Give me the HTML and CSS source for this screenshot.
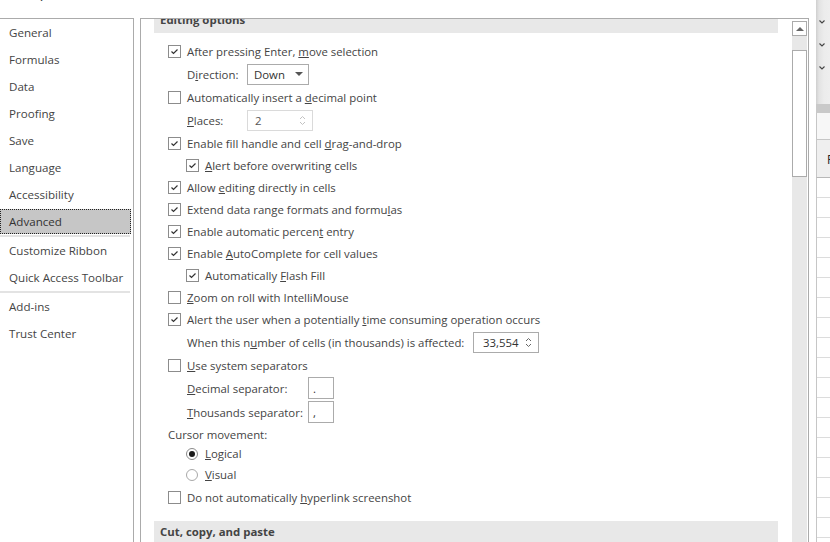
FILE: index.html
```html
<!DOCTYPE html>
<html>
<head>
<meta charset="utf-8">
<link rel="stylesheet" href="styles.css">
</head>
<body>
<div class="screen">
  <div class="dialog">
    <div class="titlebar"><span class="ttl">Options</span></div>
    <div class="panes">
      <nav class="nav">
        <div class="item">General</div>
        <div class="item">Formulas</div>
        <div class="item">Data</div>
        <div class="item">Proofing</div>
        <div class="item">Save</div>
        <div class="item">Language</div>
        <div class="item">Accessibility</div>
        <div class="item sel">Advanced</div>
        <div class="sep"></div>
        <div class="item">Customize Ribbon</div>
        <div class="item">Quick Access Toolbar</div>
        <div class="sep"></div>
        <div class="item">Add-ins</div>
        <div class="item">Trust Center</div>
      </nav>
      <div class="main">
        <div class="content">
          <div class="band top">Editing options</div>
          <div class="list">
            <div class="row"><span class="cb on"><svg viewBox="0 0 11 11"><path d="M2.5 5.5 L4.5 7.5 L8.5 3.5"/></svg></span><span class="tx">After pressing Enter, <u>m</u>ove selection</span></div>
            <div class="row t h24"><span class="lbl w60">D<u>i</u>rection:</span><span class="select">Down<i class="tri"></i></span></div>
            <div class="row"><span class="cb"></span><span class="tx">Automatically insert a <u>d</u>ecimal point</span></div>
            <div class="row t h24"><span class="lbl w60"><u>P</u>laces:</span><span class="spin dis">2<svg class="arr" viewBox="0 0 7 11"><path d="M1 4 L3.5 1.5 L6 4 M1 7 L3.5 9.5 L6 7"/></svg></span></div>
            <div class="row"><span class="cb on"><svg viewBox="0 0 11 11"><path d="M2.5 5.5 L4.5 7.5 L8.5 3.5"/></svg></span><span class="tx">Enable fill handle and cell <u>d</u>rag-and-drop</span></div>
            <div class="row n"><span class="cb on"><svg viewBox="0 0 11 11"><path d="M2.5 5.5 L4.5 7.5 L8.5 3.5"/></svg></span><span class="tx"><u>A</u>lert before overwriting cells</span></div>
            <div class="row"><span class="cb on"><svg viewBox="0 0 11 11"><path d="M2.5 5.5 L4.5 7.5 L8.5 3.5"/></svg></span><span class="tx">Allow <u>e</u>diting directly in cells</span></div>
            <div class="row"><span class="cb on"><svg viewBox="0 0 11 11"><path d="M2.5 5.5 L4.5 7.5 L8.5 3.5"/></svg></span><span class="tx">Extend data range formats and formu<u>l</u>as</span></div>
            <div class="row"><span class="cb on"><svg viewBox="0 0 11 11"><path d="M2.5 5.5 L4.5 7.5 L8.5 3.5"/></svg></span><span class="tx">Enable automatic percen<u>t</u> entry</span></div>
            <div class="row"><span class="cb on"><svg viewBox="0 0 11 11"><path d="M2.5 5.5 L4.5 7.5 L8.5 3.5"/></svg></span><span class="tx">Enable <u>A</u>utoComplete for cell values</span></div>
            <div class="row n"><span class="cb on"><svg viewBox="0 0 11 11"><path d="M2.5 5.5 L4.5 7.5 L8.5 3.5"/></svg></span><span class="tx">Automatically <u>F</u>lash Fill</span></div>
            <div class="row"><span class="cb"></span><span class="tx"><u>Z</u>oom on roll with IntelliMouse</span></div>
            <div class="row"><span class="cb on"><svg viewBox="0 0 11 11"><path d="M2.5 5.5 L4.5 7.5 L8.5 3.5"/></svg></span><span class="tx">Alert the user when a potentially <u>t</u>ime consuming operation occurs</span></div>
            <div class="row t h24"><span class="lbl w286">When this n<u>u</u>mber of cells (in thousands) is affected:</span><span class="spin num">33,554<svg class="arr" viewBox="0 0 7 11"><path d="M1 4 L3.5 1.5 L6 4 M1 7 L3.5 9.5 L6 7"/></svg></span></div>
            <div class="row"><span class="cb"></span><span class="tx"><u>U</u>se system separators</span></div>
            <div class="row t h24"><span class="lbl w121"><u>D</u>ecimal separator:</span><span class="box">.</span></div>
            <div class="row t h24"><span class="lbl w121"><u>T</u>housands separator:</span><span class="box">,</span></div>
            <div class="row h20"><span class="tx">Cursor movement:</span></div>
            <div class="row n h19"><span class="rb on"></span><span class="tx"><u>L</u>ogical</span></div>
            <div class="row n h23"><span class="rb"></span><span class="tx"><u>V</u>isual</span></div>
            <div class="row"><span class="cb"></span><span class="tx">Do not automatically <u>h</u>yperlink screenshot</span></div>
          </div>
          <div class="band next">Cut, copy, and paste</div>
        </div>
        <div class="scroll">
          <div class="up"><i class="utri"></i></div>
          <div class="track"><div class="thumb"></div></div>
        </div>
      </div>
    </div>
  </div>
  <div class="strip">
    <div class="ribbon">
      <svg class="chev" viewBox="0 0 6 4"><path d="M0.5 0.5 L3 3 L5.5 0.5"/></svg>
      <svg class="chev" viewBox="0 0 6 4"><path d="M0.5 0.5 L3 3 L5.5 0.5"/></svg>
      <svg class="chev" viewBox="0 0 6 4"><path d="M0.5 0.5 L3 3 L5.5 0.5"/></svg>
    </div>
    <div class="dark"></div>
    <div class="fbar"></div>
    <div class="colhead">F</div>
    <div class="cells"></div>
  </div>
</div>
</body>
</html>
```
FILE: styles.css
```css
* { box-sizing: border-box; }
html, body { margin: 0; padding: 0; }
body {
  width: 830px;
  height: 542px;
  overflow: hidden;
  background: #fff;
  font-family: "Open Sans", "Noto Sans", sans-serif;
  font-size: 11.4px;
  color: #444;
}
u { text-decoration: underline; text-underline-offset: 1px; }

.screen { display: flex; height: 542px; }
.dialog { width: 816px; display: flex; flex-direction: column; flex: none; }
.titlebar { height: 18px; overflow: hidden; flex: none; }
.ttl { display: block; margin-top: -19px; padding-left: 27px; font-size: 16px; line-height: 20px; color: #444; }

.panes { flex: 1; display: flex; min-height: 0; }

.nav {
  width: 134px;
  flex: none;
  border-top: 1px solid #ababab;
  border-right: 1px solid #ababab;
  font-size: 11.6px;
}
.item { height: 27px; display: flex; align-items: center; padding-left: 9px; color: #444; white-space: nowrap; }
.item.sel {
  height: 25px;
  margin: 1px 2px 1px 0;
  background: #c6c6c6;
  outline: 1px dotted #222;
  outline-offset: -1px;
  color: #333;
}
.sep { height: 2px; background: #e3e3e3; margin-right: 3px; }

.main {
  margin-left: 6px;
  width: 669px;
  flex: none;
  border: 1px solid #ababab;
  border-bottom: none;
  display: flex;
  min-height: 0;
}
.content { flex: 1; padding-left: 13px; padding-right: 14px; overflow: hidden; }
.band { background: #e8e8e8; font-weight: bold; padding-left: 6px; color: #444; }
.band.top { height: 21px; margin-top: -7px; line-height: 15px; }
.band.next { height: 24px; margin-top: 13px; line-height: 21px; }

.list { margin-top: 7px; }
.row { display: flex; align-items: center; height: 22px; padding-left: 14px; white-space: nowrap; }
.row.n { padding-left: 32px; }
.row.t { padding-left: 33px; }
.row.h24 { height: 24px; }
.row.h20 { height: 20px; }
.row.h19 { height: 19px; }
.row.h23 { height: 23px; }
.tx { white-space: pre; }

.cb {
  width: 13px; height: 13px; flex: none;
  border: 1px solid #8c8c8c;
  background: #fff;
  margin-right: 6px;
  display: flex;
}
.cb svg { width: 11px; height: 11px; }
.cb path { fill: none; stroke: #333; stroke-width: 1.2; }

.rb {
  width: 12px; height: 12px; flex: none;
  border: 1px solid #a8a8a8;
  border-radius: 50%;
  margin-right: 7px;
  display: flex; align-items: center; justify-content: center;
  background: #fff;
}
.rb.on { border-color: #8a8a8a; }
.rb.on::after { content: ""; width: 6px; height: 6px; border-radius: 50%; background: #1a1a1a; }

.lbl { flex: none; white-space: pre; }
.w60 { width: 60px; }
.w121 { width: 121px; }
.w286 { width: 286px; }

.select {
  width: 62px; height: 21px;
  border: 1px solid #ababab;
  display: flex; align-items: center; justify-content: space-between;
  padding: 0 5px 0 6px;
  color: #333;
}
.tri { width: 0; height: 0; border-left: 4px solid transparent; border-right: 4px solid transparent; border-top: 4px solid #555; }

.spin {
  width: 66px; height: 21px;
  border: 1px solid #ababab;
  display: flex; align-items: center; justify-content: space-between;
  padding: 0 6px 0 7px;
  color: #333;
}
.spin.dis { border-color: #dadada; color: #555; }
.arr { width: 7px; height: 11px; }
.arr path { fill: none; stroke: #666; stroke-width: 1; }
.spin.dis .arr path { stroke: #c2c2c2; }
.spin.num { padding-left: 9px; }

.box {
  width: 26px; height: 22px;
  border: 1px solid #ababab;
  padding-left: 4px;
  display: flex; align-items: center;
  color: #333;
}

.scroll { width: 15px; margin-right: 1px; flex: none; display: flex; flex-direction: column; padding-top: 2px; }
.up { height: 15px; border: 1px solid #ababab; background: #fff; display: flex; align-items: center; justify-content: center; flex: none; }
.utri { width: 0; height: 0; border-left: 4px solid transparent; border-right: 4px solid transparent; border-bottom: 4px solid #666; }
.track { flex: 1; background: #e8e8e8; padding-top: 14px; }
.thumb { height: 127px; border: 1px solid #ababab; background: #fff; }

.strip { flex: 1; display: flex; flex-direction: column; min-width: 0; overflow: hidden; }
.ribbon {
  height: 104px;
  background: linear-gradient(90deg, #cfcfcf 0, #e3e3e3 3px, #ececec 8px, #eeeeee 100%);
  display: flex; flex-direction: column; gap: 19px;
  padding: 20px 0 0 3px;
}
.chev { width: 6px; height: 4px; }
.chev path { fill: none; stroke: #444; stroke-width: 1.1; }
.dark { height: 9px; background: #c9c9c9; }
.fbar { height: 27px; background: #f7f7f7; border-left: 1px solid #c6c6c6; border-bottom: 1px solid #c6c6c6; }
.colhead {
  height: 38px; background: #efefef;
  border-left: 1px solid #c6c6c6; border-bottom: 1px solid #b8b8b8;
  padding-left: 10px; padding-top: 11px;
  font-size: 12px; color: #222;
}
.cells {
  flex: 1; border-left: 1px solid #c6c6c6;
  background: repeating-linear-gradient(180deg, #fff 0, #fff 19px, #dcdcdc 19px, #dcdcdc 20px);
}
```
